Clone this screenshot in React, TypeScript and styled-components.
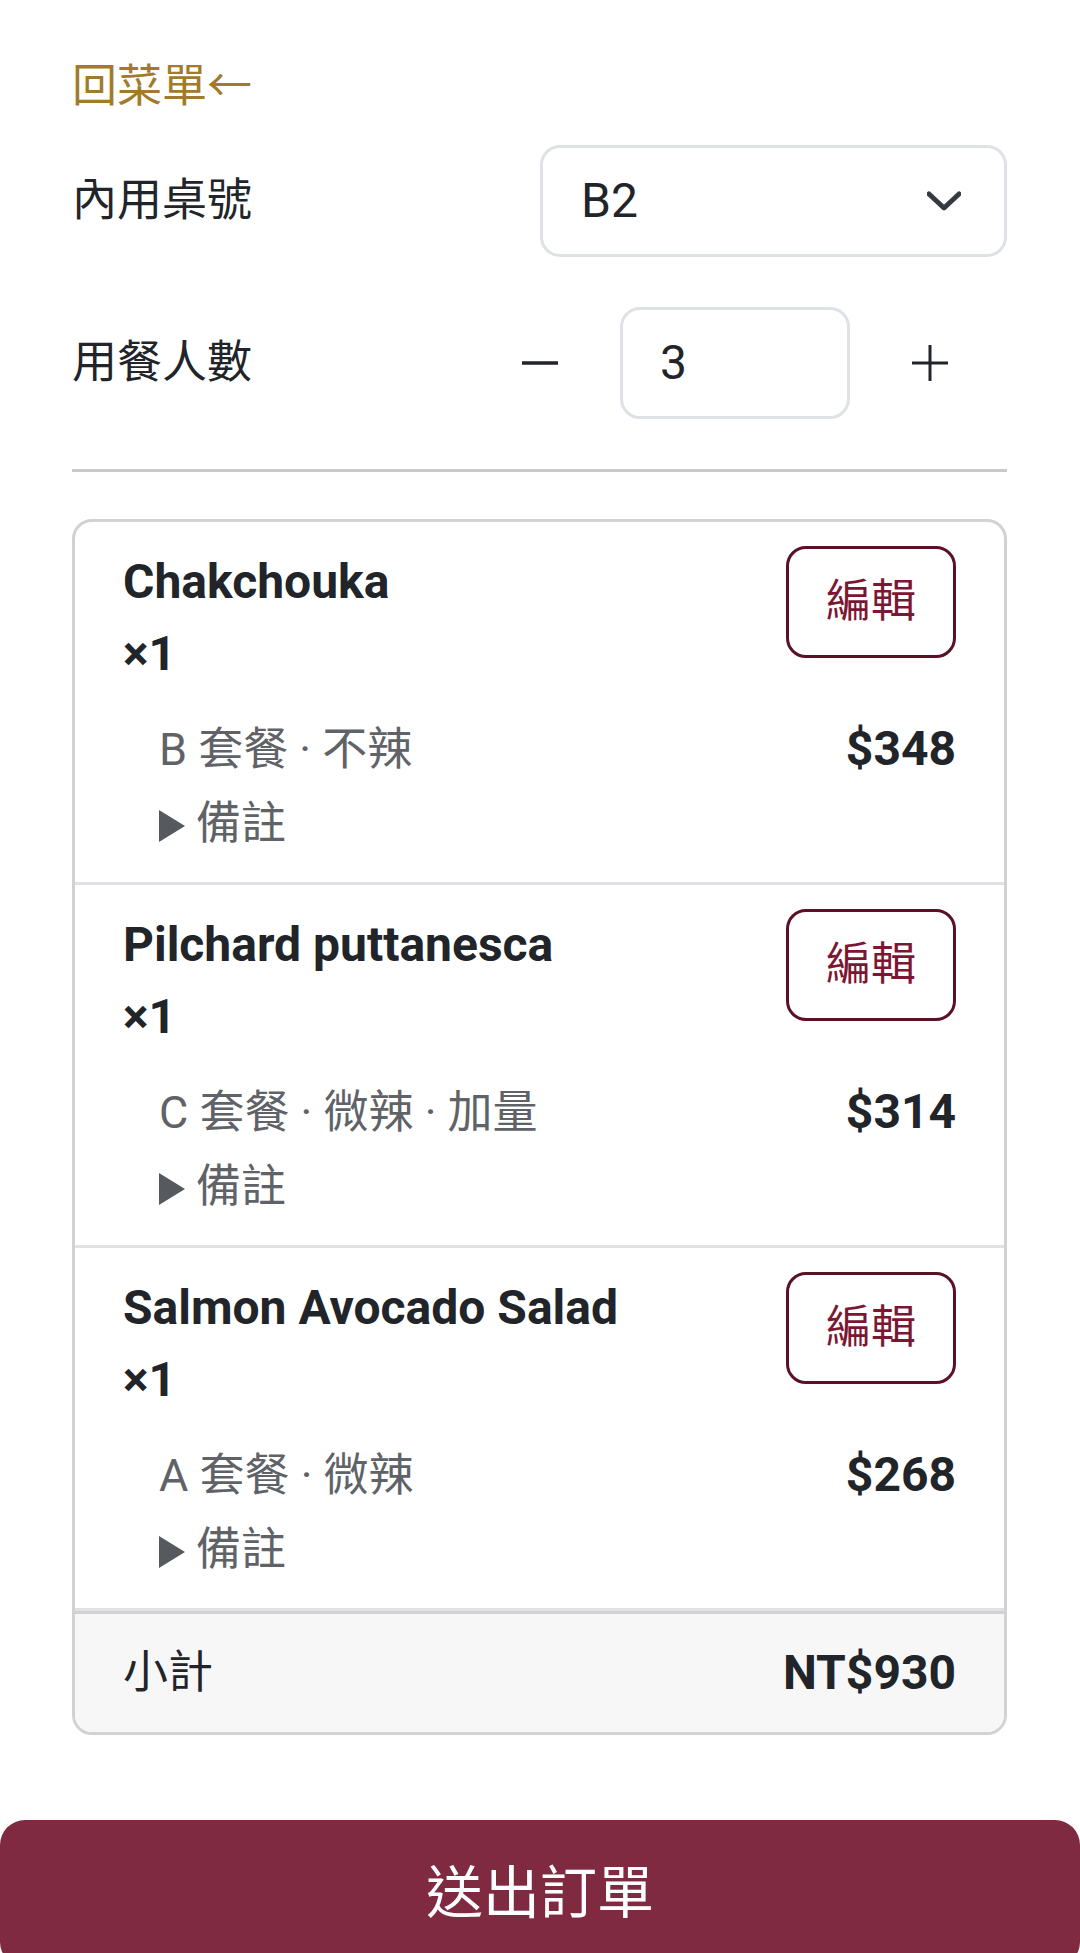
import React from "react";
import styled, { createGlobalStyle } from "styled-components";

const GlobalStyle = createGlobalStyle`
  html, body {
    margin: 0;
    padding: 0;
    background: #ffffff;
  }
  body {
    font-family: Roboto, "Noto Sans CJK TC", sans-serif;
    font-size: 48px;
    line-height: 1.5;
    color: #212529;
  }
  * { box-sizing: border-box; }
`;

const Page = styled.div`
  display: flex;
  flex-direction: column;
`;

const Content = styled.div`
  padding: 51px 73px 0 72px;
  display: flex;
  flex-direction: column;
`;

const BackLink = styled.a`
  color: #a27a2b;
  text-decoration: none;
  font-size: 45px;
  line-height: 72px;
  align-self: flex-start;
`;

const FieldRow = styled.div<{ $gap: number }>`
  margin-top: ${(p) => p.$gap}px;
  display: flex;
  align-items: center;
  justify-content: space-between;
`;

const Label = styled.div`
  font-size: 45px;
  line-height: 72px;
`;

const SelectBox = styled.div`
  width: 467px;
  height: 112px;
  border: 3px solid #dee2e6;
  border-radius: 20px;
  padding: 0 43px 0 38px;
  display: flex;
  align-items: center;
  justify-content: space-between;
  font-size: 48px;
  background: #fff;
`;

const Stepper = styled.div`
  display: flex;
  align-items: center;
  gap: 44px;
  margin-right: 41px;
`;

const StepButton = styled.button`
  width: 72px;
  height: 72px;
  padding: 0;
  border: none;
  background: transparent;
  display: flex;
  align-items: center;
  justify-content: center;
  cursor: pointer;
`;

const NumberBox = styled.div`
  width: 230px;
  height: 112px;
  border: 3px solid #dee2e6;
  border-radius: 20px;
  padding: 0 37px;
  display: flex;
  align-items: center;
  font-size: 48px;
`;

const Divider = styled.hr`
  margin: 50px 0 0;
  border: none;
  height: 3px;
  background: #c9c9c9;
`;

const Card = styled.div`
  margin-top: 47px;
  border: 3px solid #d2d2d2;
  border-radius: 20px;
  overflow: hidden;
`;

const Item = styled.div`
  padding: 24px 48px 22px;
  border-bottom: 3px solid #dfe1e4;
  &:last-of-type {
    border-bottom: none;
  }
`;

const ItemTop = styled.div`
  display: flex;
  justify-content: space-between;
  align-items: flex-start;
`;

const ItemTitle = styled.div`
  font-weight: 700;
  font-size: 48px;
  line-height: 72px;
`;

const EditButton = styled.button`
  font-family: inherit;
  font-size: 45px;
  line-height: 72px;
  color: #7b1733;
  background: #fff;
  border: 3px solid #5a1025;
  border-radius: 20px;
  padding: 17px 37px;
  cursor: pointer;
`;

const ItemBody = styled.div`
  margin-top: 23px;
  padding-left: 36px;
`;

const OptionRow = styled.div`
  display: flex;
  justify-content: space-between;
  align-items: baseline;
`;

const Options = styled.div`
  color: #5f6368;
  font-size: 45px;
  line-height: 72px;
`;

const Price = styled.div`
  font-weight: 700;
  font-size: 48px;
  line-height: 72px;
`;

const Notes = styled.details`
  margin-top: 2px;
  color: #5f6368;
`;

const NotesSummary = styled.summary`
  list-style: none;
  display: flex;
  align-items: center;
  gap: 11px;
  font-size: 45px;
  line-height: 72px;
  cursor: pointer;
  &::-webkit-details-marker {
    display: none;
  }
  &::before {
    content: "";
    width: 0;
    height: 0;
    border-left: 26px solid #56595e;
    border-top: 16px solid transparent;
    border-bottom: 16px solid transparent;
    margin-top: 4px;
  }
`;

const Subtotal = styled.div`
  border-top: 3px solid #d2d2d2;
  background: #f7f7f7;
  padding: 23px 48px 23px 48px;
  display: flex;
  justify-content: space-between;
  align-items: center;
  font-size: 48px;
  line-height: 72px;
`;

const SubtotalLabel = styled.span`
  font-size: 45px;
`;

const SubtotalValue = styled.span`
  font-weight: 700;
`;

const SubmitButton = styled.button`
  margin-top: 85px;
  width: 100%;
  border: none;
  border-radius: 25px;
  background: #7f2a40;
  color: #ffffff;
  font-family: Roboto, "Noto Sans CJK TC", sans-serif;
  font-size: 57px;
  line-height: 87px;
  padding: 30px 0;
  cursor: pointer;
`;

type Entry = { name: string; qty: number; options: string; price: number };

const items: Entry[] = [
  { name: "Chakchouka", qty: 1, options: "B 套餐 · 不辣", price: 348 },
  { name: "Pilchard puttanesca", qty: 1, options: "C 套餐 · 微辣 · 加量", price: 314 },
  { name: "Salmon Avocado Salad", qty: 1, options: "A 套餐 · 微辣", price: 268 },
];

const Chevron = () => (
  <svg width="34" height="20" viewBox="0 0 34 20" fill="none">
    <polyline
      points="2,3 17,17 32,3"
      stroke="#343a40"
      strokeWidth="5"
      strokeLinecap="round"
      strokeLinejoin="round"
    />
  </svg>
);

const MinusIcon = () => (
  <svg width="36" height="36" viewBox="0 0 36 36">
    <line x1="0" y1="18" x2="36" y2="18" stroke="#212529" strokeWidth="3.5" />
  </svg>
);

const PlusIcon = () => (
  <svg width="36" height="36" viewBox="0 0 36 36">
    <line x1="0" y1="18" x2="36" y2="18" stroke="#212529" strokeWidth="3" />
    <line x1="18" y1="0" x2="18" y2="36" stroke="#212529" strokeWidth="3" />
  </svg>
);

export default function App() {
  const total = items.reduce((s, i) => s + i.price * i.qty, 0);
  return (
    <Page>
      <GlobalStyle />
      <Content>
        <BackLink href="#">回菜單←</BackLink>
        <FieldRow $gap={22}>
          <Label>內用桌號</Label>
          <SelectBox>
            <span>B2</span>
            <Chevron />
          </SelectBox>
        </FieldRow>
        <FieldRow $gap={50}>
          <Label>用餐人數</Label>
          <Stepper>
            <StepButton aria-label="減少">
              <MinusIcon />
            </StepButton>
            <NumberBox>3</NumberBox>
            <StepButton aria-label="增加">
              <PlusIcon />
            </StepButton>
          </Stepper>
        </FieldRow>
        <Divider />
        <Card>
          {items.map((it) => (
            <Item key={it.name}>
              <ItemTop>
                <ItemTitle>
                  <div>{it.name}</div>
                  <div>×{it.qty}</div>
                </ItemTitle>
                <EditButton>編輯</EditButton>
              </ItemTop>
              <ItemBody>
                <OptionRow>
                  <Options>{it.options}</Options>
                  <Price>${it.price}</Price>
                </OptionRow>
                <Notes>
                  <NotesSummary>備註</NotesSummary>
                </Notes>
              </ItemBody>
            </Item>
          ))}
          <Subtotal>
            <SubtotalLabel>小計</SubtotalLabel>
            <SubtotalValue>NT${total}</SubtotalValue>
          </Subtotal>
        </Card>
      </Content>
      <SubmitButton>送出訂單</SubmitButton>
    </Page>
  );
}
